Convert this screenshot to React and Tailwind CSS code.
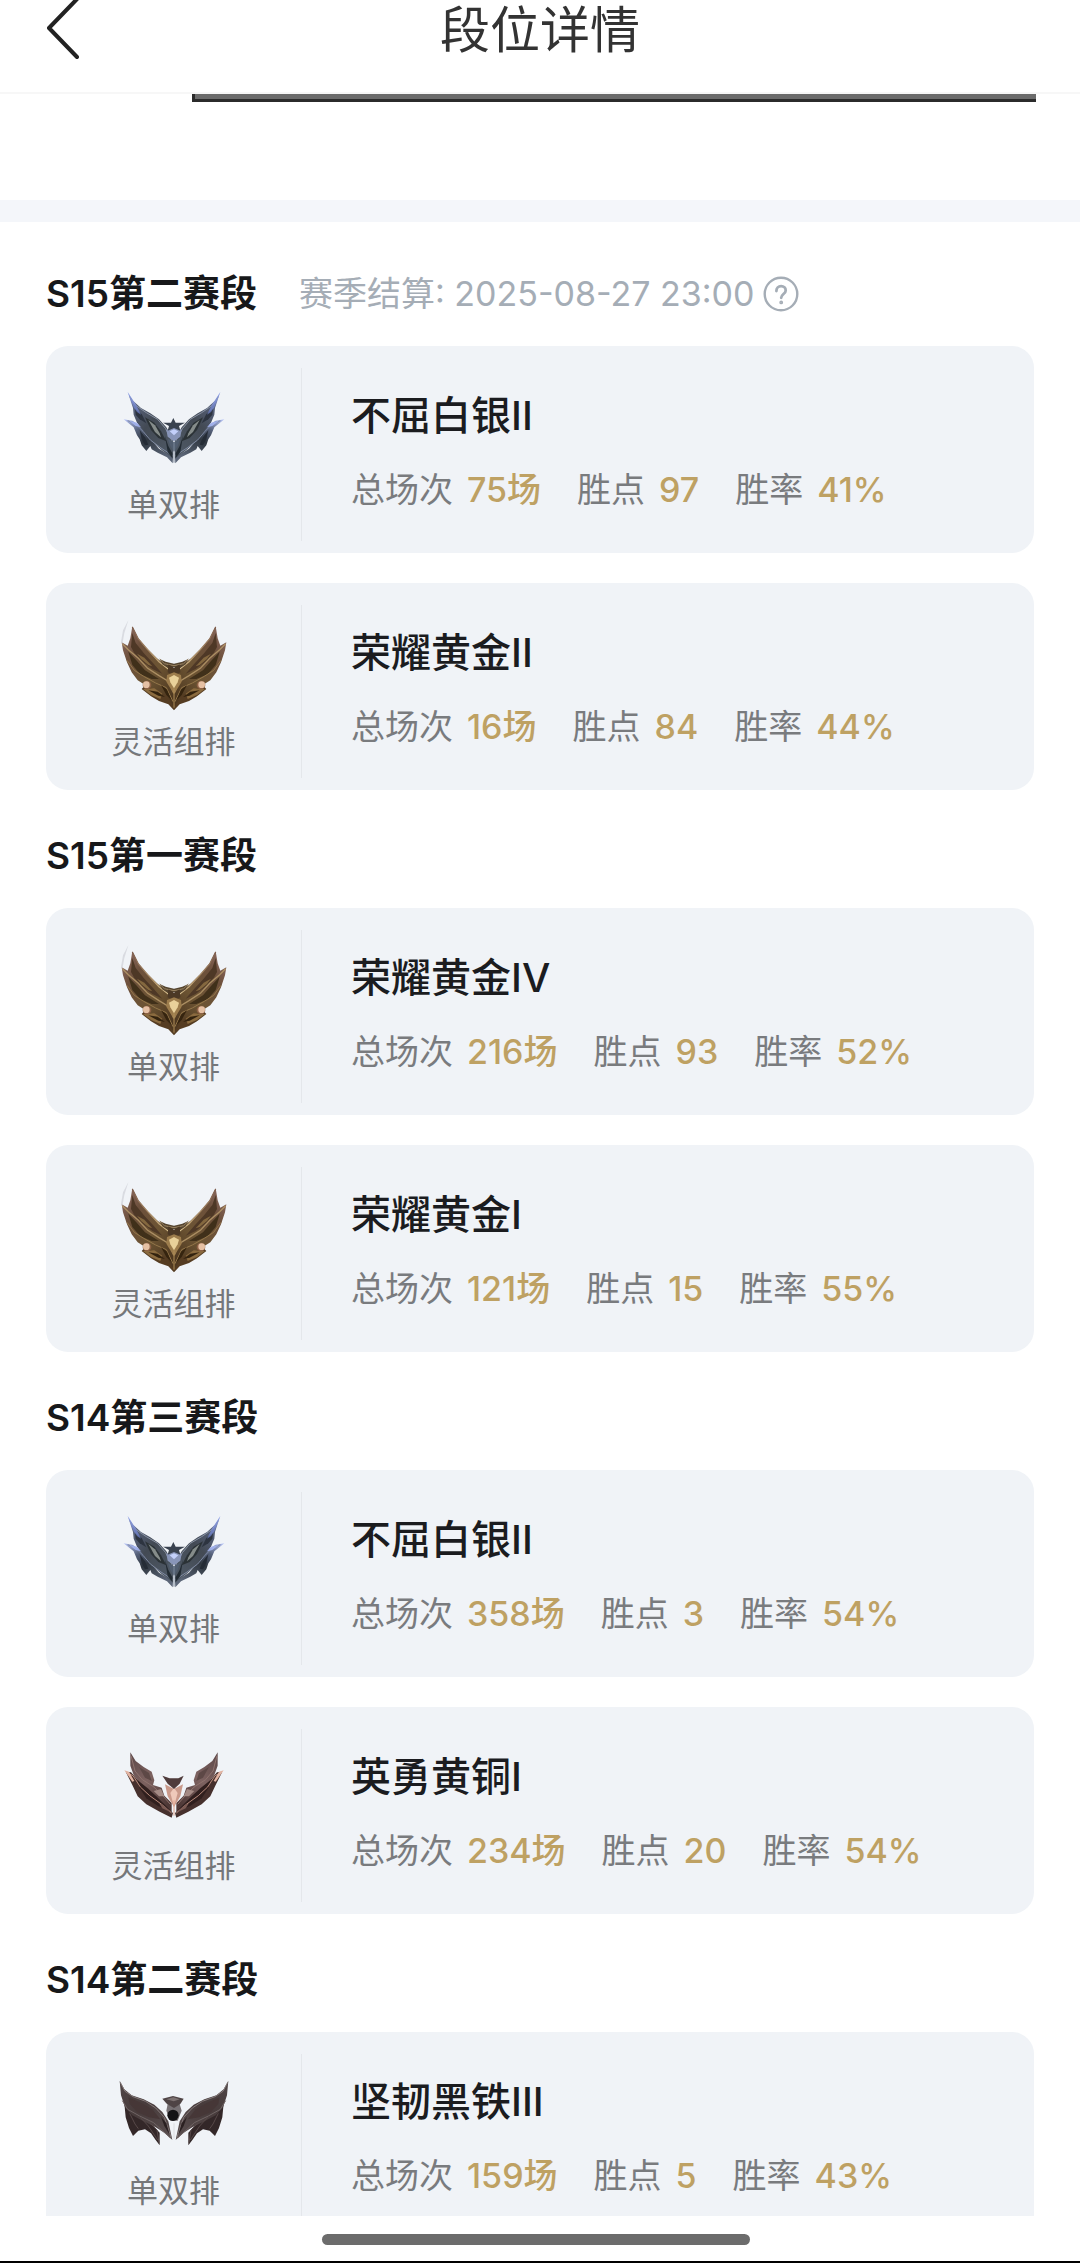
const seasons = [
  {
    name: "S15第二赛段",
    settle: "赛季结算: 2025-08-27 23:00",
    ranks: [
      { tier: "silver", queue: "单双排", title: "不屈白银II", games: 75, points: 97, rate: 41 },
      { tier: "gold", queue: "灵活组排", title: "荣耀黄金II", games: 16, points: 84, rate: 44 },
    ],
  },
  {
    name: "S15第一赛段",
    ranks: [
      { tier: "gold", queue: "单双排", title: "荣耀黄金IV", games: 216, points: 93, rate: 52 },
      { tier: "gold", queue: "灵活组排", title: "荣耀黄金I", games: 121, points: 15, rate: 55 },
    ],
  },
  {
    name: "S14第三赛段",
    ranks: [
      { tier: "silver", queue: "单双排", title: "不屈白银II", games: 358, points: 3, rate: 54 },
      { tier: "bronze", queue: "灵活组排", title: "英勇黄铜I", games: 234, points: 20, rate: 54 },
    ],
  },
  {
    name: "S14第二赛段",
    ranks: [
      { tier: "iron", queue: "单双排", title: "坚韧黑铁III", games: 159, points: 5, rate: 43 },
    ],
  },
];

// Shared gradients for every crest
function CrestDefs() {
  return (
    <svg className="absolute size-0" aria-hidden="true">
      <defs>
        <linearGradient id="silver-wing" x1="0" y1="0" x2="0.7" y2="1">
          <stop offset="0" stopColor="#a3b2f0" />
          <stop offset="0.22" stopColor="#566079" />
          <stop offset="0.55" stopColor="#434a54" />
          <stop offset="1" stopColor="#4d5763" />
        </linearGradient>
        <linearGradient id="silver-feather" x1="0" y1="0" x2="0.6" y2="1">
          <stop offset="0" stopColor="#b9c6fb" />
          <stop offset="0.3" stopColor="#56617a" />
          <stop offset="0.55" stopColor="#303740" />
          <stop offset="1" stopColor="#5c6678" />
        </linearGradient>
        <linearGradient id="gold-wing" x1="0" y1="0" x2="0.8" y2="1">
          <stop offset="0" stopColor="#93706a" />
          <stop offset="0.3" stopColor="#6d503c" />
          <stop offset="0.65" stopColor="#6c5433" />
          <stop offset="1" stopColor="#4e3820" />
        </linearGradient>
        <linearGradient id="gold-edge" x1="0" y1="0" x2="1" y2="1">
          <stop offset="0" stopColor="#7d5d4c" />
          <stop offset="0.6" stopColor="#b89c72" />
          <stop offset="1" stopColor="#e6cf9c" />
        </linearGradient>
        <linearGradient id="bronze-wing" x1="0" y1="0" x2="0.7" y2="1">
          <stop offset="0" stopColor="#5c4748" />
          <stop offset="0.5" stopColor="#7d6260" />
          <stop offset="1" stopColor="#4e3836" />
        </linearGradient>
        <linearGradient id="iron-wing" x1="0" y1="0" x2="0.8" y2="1">
          <stop offset="0" stopColor="#4f4546" />
          <stop offset="0.5" stopColor="#483c3c" />
          <stop offset="1" stopColor="#574c4d" />
        </linearGradient>
      </defs>
    </svg>
  );
}

function SilverHalf() {
  return (
    <g>
      <path d="M44 148L70 152L92 166L112 186L130 214L150 236L192 262L191 280L174 262L146 248L128 238L124 228L112 243L98 226L92 208L84 196L74 172Z" fill="url(#silver-feather)" />
      <path d="M56 66L72 92L96 114L124 130L150 148L172 172L192 208L192 266L158 240L128 214L104 182L84 158L74 134L72 114Z" fill="url(#silver-wing)" />
      <path d="M78 116L98 132L112 160L92 148L80 134Z" fill="#2d3440" />
      <path d="M108 142L136 158L156 184L172 214L148 204L126 180Z" fill="#2b3236" />
      <path d="M118 150L138 166L152 190L156 202L138 186Z" fill="#858c8a" />
      <path d="M62 80L80 106L112 128L146 148L170 176L190 214" fill="none" stroke="#8b94a5" strokeWidth="3" />
      <path d="M56 152L80 162L102 184L124 210L156 234L190 256" fill="none" stroke="#7f8aa2" strokeWidth="3" />
      <path d="M60 152L84 158L96 172L80 168Z" fill="#a9b9fa" opacity="0.8" />
      <path d="M92 180L108 202L118 224L108 226L98 208Z" fill="#252c36" />
      <path d="M168 198L178 228L190 250L190 264L176 246Z" fill="#222b33" />
      <path d="M56 66L80 102L96 134L84 126L74 112Z" fill="#7e93ea" opacity="0.6" />
    </g>
  );
}

function GoldHalf() {
  return (
    <g>
      <path d="M98 234L126 256L150 270L178 280L195 298V230L150 214L124 208Z" fill="#553c22" />
      <path d="M70 46L88 82L112 110L144 142L172 164L195 184V290L172 252L144 240L112 224L86 208L68 184L54 154L42 118L38 94L56 104L64 82Z" fill="url(#gold-wing)" />
      <path d="M70 66L80 96L106 128L134 158L160 188L130 174L96 148L76 126L66 108Z" fill="#4e3826" />
      <path d="M58 122L82 148L108 178L150 204L128 204L94 190L70 162Z" fill="#40301a" />
      <path d="M84 128L106 140L130 166L118 162L96 144Z" fill="#84683f" />
      <path d="M70 48L88 84L116 116L150 152L178 174L194 192" fill="none" stroke="url(#gold-edge)" strokeWidth="4" />
      <path d="M40 98L58 116L88 142L116 172L150 194L180 212L194 246" fill="none" stroke="#ac8f63" strokeWidth="4" />
      <path d="M54 148L76 178L104 196L140 216L172 230L192 272" fill="none" stroke="#94774a" strokeWidth="3" />
      <path d="M102 234L136 232L160 248L154 264L126 252Z" fill="#8b6b3f" />
      <path d="M118 238L146 242L168 258L148 254Z" fill="#33230f" />
      <path d="M156 222L174 236L188 268L172 252Z" fill="#35240f" />
      <path d="M152 144L170 152L195 158V168L178 172L160 160Z" fill="#54442f" />
      <path d="M152 144L166 158L195 164" fill="none" stroke="#9c8563" strokeWidth="3" />
      <circle cx="114" cy="222" r="13" fill="#8d6145" />
      <circle cx="112" cy="221" r="10" fill="#e5c0a3" />
    </g>
  );
}

function BronzeHalf() {
  return (
    <g>
      <path d="M50 110L66 112L84 132L112 150L138 178L164 210L192 234L188 248L152 230L112 208L86 184L70 150Z" fill="#46302d" />
      <path d="M64 52L80 78L104 96L128 110L136 136L132 150L158 158L166 182L188 204L188 236L150 214L118 184L96 148L74 120L64 92Z" fill="url(#bronze-wing)" />
      <path d="M90 96L120 114L128 138L108 128Z" fill="#5d4846" />
      <path d="M86 136L116 160L142 184L184 226L148 214L112 190L92 160Z" fill="#301f1e" />
      <path d="M52 112L72 122L94 156L122 182L158 208L188 234" fill="none" stroke="#b98b7c" strokeWidth="3" />
      <path d="M66 62L78 108L100 134L132 154L158 178L184 208" fill="none" stroke="#8f736e" strokeWidth="3" />
      <path d="M134 168L156 162L166 184L150 184Z" fill="#a58b85" />
      <path d="M46 106L60 110L76 138L70 140Z" fill="#e3b4a2" />
      <path d="M150 204L170 216L186 232L160 220Z" fill="#7c5b54" />
    </g>
  );
}

function IronHalf() {
  return (
    <g>
      <path d="M46 130L60 152L90 168L128 192L152 218L152 256L140 240L126 220L108 208L88 212L72 228L60 204L50 172Z" fill="#332728" />
      <path d="M32 62L46 88L68 106L104 118L136 134L160 156L178 184L190 240L172 222L140 202L104 184L70 166L48 142L36 106Z" fill="url(#iron-wing)" />
      <path d="M58 112L96 128L130 148L154 178L120 172L84 156L62 132Z" fill="#463737" />
      <path d="M34 68L48 94L72 110L110 124L140 144L166 172L186 232" fill="none" stroke="#857a7a" strokeWidth="3" />
      <path d="M40 122L56 148L92 168L134 188L184 234" fill="none" stroke="#6f6464" strokeWidth="3" />
      <path d="M62 160L78 192L88 206M94 172L118 198L146 240M124 190L144 210L150 248" fill="none" stroke="#574949" strokeWidth="3" />
      <path d="M156 170L172 190L182 224L166 198Z" fill="#2a2021" />
    </g>
  );
}

const halves = { silver: SilverHalf, gold: GoldHalf, bronze: BronzeHalf, iron: IronHalf };

const gems = {
  silver: (
    <g>
      <path d="M172 180L195 170L218 180L214 200L195 214L176 200Z" fill="#8895b8" />
      <path d="M182 184L195 178L208 184L195 196Z" fill="#c3d0fa" />
      <path d="M176 206L195 216L214 206L206 228L195 246L184 228Z" fill="#515e70" />
      <path d="M193 144L200 158L228 158L210 168L214 182L195 174L176 182L180 168L162 158L186 158Z" fill="#39424f" />
      <path d="M195 216V278" stroke="#7a8799" strokeWidth="3" />
    </g>
  ),
  gold: (
    <g>
      <path d="M58 28L42 58L36 92L40 100L46 66Z" fill="#c9cbd2" opacity="0.6" />
      <path d="M178 160L195 170L212 160L214 184L195 194L176 184Z" fill="#4b3825" />
      <path d="M174 192L195 184L216 192L218 212L195 250L172 212Z" fill="#9c7c4c" />
      <path d="M180 200L195 192L210 200L206 214L195 232L184 214Z" fill="#e9d19a" />
      <path d="M195 232V290" stroke="#b08e58" strokeWidth="3" />
    </g>
  ),
  bronze: (
    <g>
      <path d="M168 148L195 162L222 148L214 184L195 216L176 184Z" fill="#c9998a" />
      <path d="M184 174L195 158L206 174L200 196L195 214L190 196Z" fill="#efc9ba" />
      <path d="M160 122L182 130L208 130L224 122L212 146L195 162L176 146Z" fill="#4f3b3b" />
      <path d="M195 196V242" stroke="#dda18a" strokeWidth="3" />
    </g>
  ),
  iron: (
    <g>
      <path d="M176 132L195 140L212 132L218 152L206 182L184 182L172 152Z" fill="#777174" />
      <path d="M160 116L192 108L224 116L214 132L195 144L174 132Z" fill="#4f4445" />
      <path d="M172 118L193 112L212 118L194 124Z" fill="#7d7272" />
      <circle cx="192" cy="166" r="17" fill="#141316" />
      <path d="M195 190V236" stroke="#dcdcdf" strokeWidth="3" />
    </g>
  ),
};

function Crest({ tier }) {
  const Half = halves[tier];
  return (
    <svg className="mt-6 h-[110px] w-[130px]" viewBox={tier === "silver" ? "0 0 390 330" : "0 -12 390 330"} aria-hidden="true">
      <Half />
      <g transform="matrix(-1 0 0 1 390 0)">
        <Half />
      </g>
      {gems[tier]}
    </svg>
  );
}

function Stat({ label, value }) {
  return (
    <div className="flex gap-[14px]">
      <dt className="text-[#797b7e]">{label}</dt>
      <dd className="font-medium text-[#bea163]">{value}</dd>
    </div>
  );
}

function RankCard({ rank }) {
  return (
    <li className="flex h-[207px] rounded-[22px] bg-[#f0f3f7]">
      <div className="flex w-[255px] shrink-0 flex-col items-center">
        <Crest tier={rank.tier} />
        <div className="text-[31px] leading-[50px] text-[#75777a]">{rank.queue}</div>
      </div>
      <div className="mt-[22px] mb-3 w-px bg-[#e4e7eb]" />
      <div className="flex-1 pt-11 pl-[49px]">
        <h3 className="text-[40px] leading-[52px] font-medium text-[#1b1c1f]">{rank.title}</h3>
        <dl className="mt-6 flex gap-9 text-[34px] leading-[48px]">
          <Stat label="总场次" value={`${rank.games}场`} />
          <Stat label="胜点" value={rank.points} />
          <Stat label="胜率" value={`${rank.rate}%`} />
        </dl>
      </div>
    </li>
  );
}

function Season({ season }) {
  return (
    <section>
      <div className="flex items-center">
        <h2 className="text-[37px] leading-[54px] font-semibold text-[#17181a]">{season.name}</h2>
        {season.settle && (
          <div className="ml-[42px] flex items-center gap-2 text-[34px] leading-[54px] text-[#a5adb6]">
            <span>{season.settle}</span>
            <button type="button" aria-label="赛季结算说明">
              <svg className="size-9" viewBox="0 0 36 36" fill="none" stroke="currentColor" strokeWidth="2.4" strokeLinecap="round">
                <circle cx="18" cy="18" r="16.3" />
                <path d="M13.4 15c0-3 2-4.8 4.7-4.8s4.6 1.7 4.6 4.2c0 3.4-4.5 3.8-4.5 7.4" strokeWidth="2.8" />
                <circle cx="18.2" cy="26.4" r="0.7" fill="currentColor" />
              </svg>
            </button>
          </div>
        )}
      </div>
      <ul className="mt-[25px] flex flex-col gap-[30px]">
        {season.ranks.map((rank) => (
          <RankCard key={rank.queue} rank={rank} />
        ))}
      </ul>
    </section>
  );
}

export default function App() {
  return (
    <div className="flex h-screen flex-col overflow-hidden bg-white font-['Inter','Noto_Sans_CJK_SC',sans-serif]">
      <CrestDefs />
      <header className="grid h-[94px] shrink-0 grid-cols-[1fr_auto_1fr] items-start border-b-2 border-[#f7f7f7]">
        <button type="button" aria-label="返回" className="ml-[45px] w-9">
          <svg className="h-[60px] w-9" viewBox="0 0 36 60" fill="none" stroke="#222222" strokeWidth="4" strokeLinejoin="round" strokeLinecap="round">
            <path d="M32 -1L4 28L32 57" />
          </svg>
        </button>
        <h1 className="text-[50px] leading-[60px] text-[#333333]">段位详情</h1>
      </header>

      <main className="min-h-0 flex-1 overflow-hidden">
        <div className="h-[106px]">
          <div className="mr-11 ml-48 h-2 border-b-3 border-l-3 border-[#2b2b2b] bg-[#6b6b6b]" />
        </div>
        <div className="h-[22px] bg-[#f4f6fa]" />
        <div className="flex flex-col gap-[39px] px-[46px] pt-[45px]">
          {seasons.map((season) => (
            <Season key={season.name} season={season} />
          ))}
        </div>
      </main>

      <footer className="flex h-[47px] shrink-0 justify-center border-b-2 border-black pt-[18px] pr-2">
        <div className="h-[11px] w-[428px] rounded-full bg-[#6c6c6c]" />
      </footer>
    </div>
  );
}
